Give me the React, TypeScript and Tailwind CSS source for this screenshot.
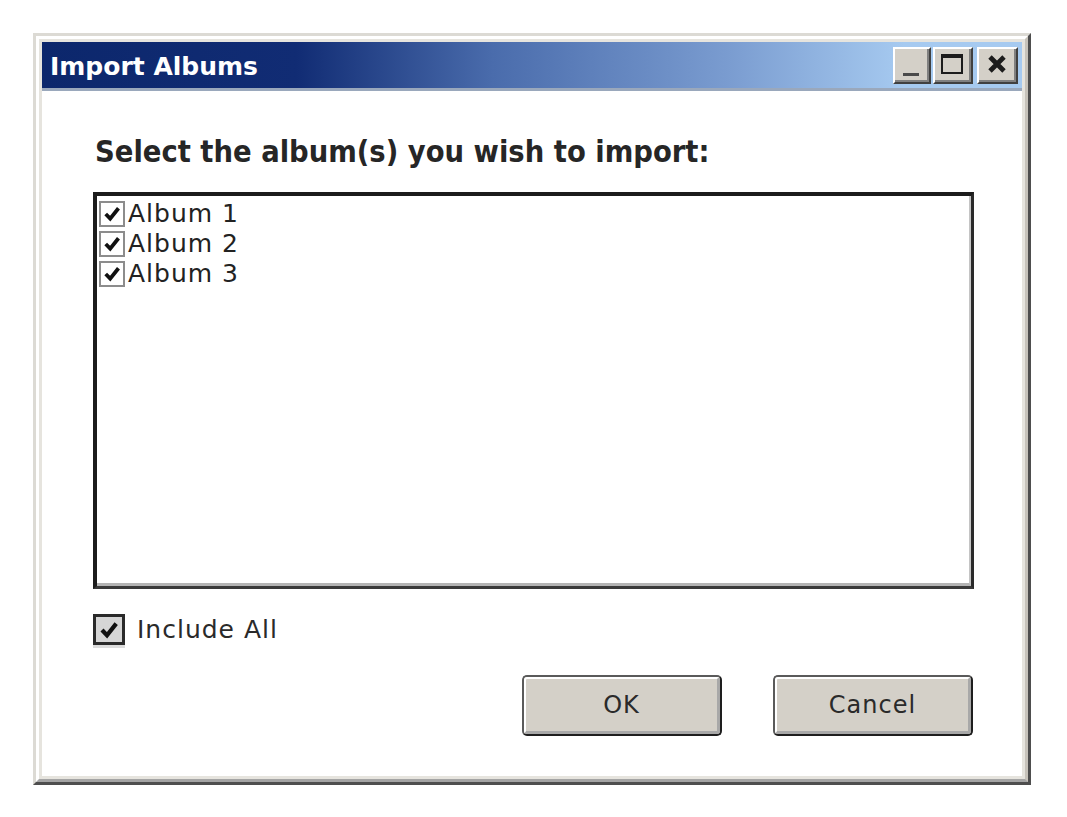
import { useState } from "react";

const albums = ["Album 1", "Album 2", "Album 3"];

function Check({ className }: { className?: string }) {
  return (
    <svg viewBox="0 0 10 10" className={className}>
      <path d="M1.5 5 L4 7.6 L8.6 1.8" fill="none" stroke="#111" strokeWidth="2.1" strokeLinejoin="miter" />
    </svg>
  );
}

function TitleButton({ children, className }: { children: React.ReactNode; className?: string }) {
  return (
    <div className={"h-[37px] border-t-2 border-l-2 border-b-2 border-r-2 border-t-white border-l-white border-b-[#404040] border-r-[#404040] bg-[#d4d0c8] " + (className ?? "")}>
      <div className="flex h-full w-full items-center justify-center border-b-2 border-r-2 border-b-[#808080] border-r-[#808080]">
        {children}
      </div>
    </div>
  );
}

function DialogButton({ label }: { label: string }) {
  return (
    <button className="h-[61px] w-[200px] rounded-[5px] border-2 border-t-[#5a5a5a] border-l-[#5a5a5a] border-r-[#1e1e1e] border-b-[#1e1e1e] bg-[#d4d0c8] p-0">
      <span className="flex h-full w-full items-center justify-center rounded-[3px] border-t-2 border-l-2 border-b-[3px] border-r-[3px] border-t-white border-l-white border-b-[#a8a8a8] border-r-[#a8a8a8] font-['DejaVu_Sans',sans-serif] text-[24px] tracking-[1px] text-[#2a2a2a]">
        {label}
      </span>
    </button>
  );
}

export default function App() {
  const [checked, setChecked] = useState([true, true, true]);

  return (
    <main className="min-h-screen bg-white pl-[33px] pt-[33px]">
      <div className="w-[998px] border-[3px] border-t-[#dcdad4] border-l-[#dcdad4] border-r-[#4e4e4e] border-b-[#4e4e4e]">
        <div className="border-[3px] border-t-white border-l-white border-r-[#c6c2ba] border-b-[#a4a4a4] bg-[#e6e4de] p-[3px]">
          {/* title bar */}
          <div className="flex h-[49px] items-center justify-between bg-[linear-gradient(to_right,#0c276c_0%,#112c74_26%,#4a6cac_46%,#7a9cd0_70%,#a6caf0_88%,#a6caf0_100%)] pl-[8px] pr-[4px] border-b-[3px] border-b-[#9aa8bc]">
            <span className="pt-[4px] font-['DejaVu_Sans',sans-serif] text-[25px] font-bold text-white">
              Import Albums
            </span>
            <div className="flex items-center">
              <TitleButton className="w-[38px]">
                <div className="mt-[20px] h-[3px] w-[16px] bg-[#4a4a4a]" />
              </TitleButton>
              <TitleButton className="ml-[2px] w-[40px]">
                <div className="h-[20px] w-[22px] border-2 border-t-[4px] border-[#1c1c1c]" />
              </TitleButton>
              <TitleButton className="ml-[4px] w-[41px]">
                <svg viewBox="0 0 10 10" className="h-[20px] w-[22px]">
                  <path d="M1.5 1.5 L8.5 8.5 M8.5 1.5 L1.5 8.5" stroke="#1c1c1c" strokeWidth="2.4" />
                </svg>
              </TitleButton>
            </div>
          </div>

          {/* body */}
          <div className="bg-white pb-[40px] pl-[51px] pr-[45px] pt-[44px]">
            <h1 className="ml-[2px] font-['DejaVu_Sans_Condensed','DejaVu_Sans',sans-serif] text-[30.5px] font-bold leading-[34px] text-[#262626]">
              Select the album(s) you wish to import:
            </h1>

            <div className="mt-[23px] h-[397px] w-[881px] border-t-4 border-l-4 border-b-[3px] border-r-[3px] border-t-[#1c1c1c] border-l-[#1c1c1c] border-b-[#3a3a3a] border-r-[#2a2a2a]">
              <div className="h-full w-full border-b-[3px] border-r-[2px] border-b-[#b4b4b4] border-r-[#c4c4c4] pl-[2px] pt-[3px]">
                {albums.map((name, i) => (
                  <label key={name} className="flex h-[30px] cursor-pointer items-center">
                    <span
                      onClick={() => setChecked(checked.map((c, j) => (j === i ? !c : c)))}
                      className="flex h-[26px] w-[26px] items-center justify-center border-2 border-[#8c8c8c] bg-white"
                    >
                      {checked[i] && <Check className="h-[18px] w-[18px]" />}
                    </span>
                    <span className="ml-[3px] font-['DejaVu_Sans',sans-serif] text-[25px] leading-[30px] tracking-[1px] text-[#222]">
                      {name}
                    </span>
                  </label>
                ))}
              </div>
            </div>

            <div className="mt-[22px] flex items-center">
              <span className="flex h-[31px] w-[32px] items-center justify-center border-[3px] border-[#2a2a2a] bg-[#d6d6d6] shadow-[0_3px_0_#dcdcdc]">
                <Check className="h-[20px] w-[20px]" />
              </span>
              <span className="ml-[12px] font-['DejaVu_Sans',sans-serif] text-[25px] tracking-[1px] text-[#2a2a2a]">
                Include All
              </span>
            </div>

            <div className="mt-[26px] flex justify-end gap-[51px] pr-[4px]">
              <DialogButton label="OK" />
              <DialogButton label="Cancel" />
            </div>
          </div>
        </div>
      </div>
    </main>
  );
}
